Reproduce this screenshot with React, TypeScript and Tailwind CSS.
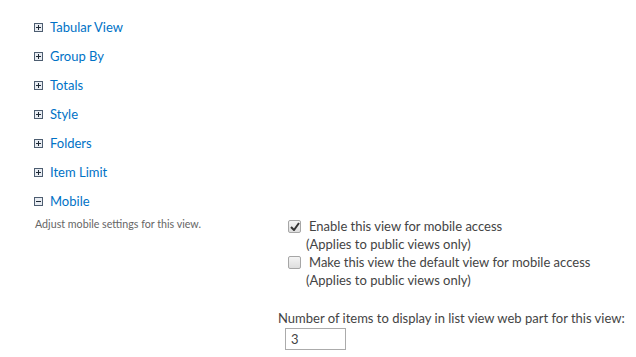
import React from 'react'

const sections = ['Tabular View', 'Group By', 'Totals', 'Style', 'Folders', 'Item Limit']

const font = { fontFamily: '"Segoe UI", Lato, "Open Sans", sans-serif' }

const ToggleBox: React.FC<{ open?: boolean }> = ({ open }) => (
  <svg width="9" height="9" viewBox="0 0 9 9" className="shrink-0">
    <rect x="0.5" y="0.5" width="8" height="8" fill="#e8ecf2" stroke="#4d5d70" />
    <line x1="2" y1="4.5" x2="7" y2="4.5" stroke="#1f2a36" />
    {!open && <line x1="4.5" y1="2" x2="4.5" y2="7" stroke="#1f2a36" />}
  </svg>
)

const Check: React.FC<{ checked?: boolean }> = ({ checked }) => (
  <span className="w-[13px] h-[13px] shrink-0 rounded-[2px] border border-[#a6a6a6] bg-gradient-to-b from-[#f4f4f4] to-[#dedede] flex items-center justify-center">
    {checked && (
      <svg width="10" height="9" viewBox="0 0 10 9">
        <path d="M1 5 L4 8 L9 1" fill="none" stroke="#333" strokeWidth="2" />
      </svg>
    )}
  </span>
)

export default function App() {
  return (
    <div className="w-[636px] h-[357px] bg-white overflow-hidden pl-[34px] pt-[18px]" style={font}>
      <div className="flex flex-col gap-[10px]">
        {sections.map((s) => (
          <div key={s} className="flex items-center gap-[7px] h-[19px]">
            <ToggleBox />
            <span className="text-[13px] text-[#0072c6]">{s}</span>
          </div>
        ))}
        <div className="flex items-center gap-[7px] h-[19px]">
          <ToggleBox open />
          <span className="text-[13px] text-[#0072c6]">Mobile</span>
        </div>
      </div>
      <div className="flex mt-[5px]">
        <div className="w-[244px] shrink-0 text-[10.7px] text-[#666] pl-px">
          Adjust mobile settings for this view.
        </div>
        <div className="flex flex-col text-[13px] text-[#444]">
          <div className="flex items-start gap-[8px] pl-[10px] mt-[1px]">
            <span className="mt-[3px]"><Check checked /></span>
            <div className="flex flex-col leading-[18px]">
              <span>Enable this view for mobile access</span>
              <span className="-ml-[3px]">(Applies to public views only)</span>
            </div>
          </div>
          <div className="flex items-start gap-[8px] pl-[10px]">
            <span className="mt-[3px]"><Check /></span>
            <div className="flex flex-col leading-[18px]">
              <span>Make this view the default view for mobile access</span>
              <span className="-ml-[3px]">(Applies to public views only)</span>
            </div>
          </div>
          <div className="mt-[20px] leading-[18px]">
            Number of items to display in list view web part for this view:
          </div>
          <div className="pl-[7px] mt-[1px]">
            <input
              type="text"
              defaultValue="3"
              className="w-[61px] h-[22px] border border-[#ababab] px-[5px] text-[13px] text-[#444] outline-none"
              style={font}
            />
          </div>
        </div>
      </div>
    </div>
  )
}
